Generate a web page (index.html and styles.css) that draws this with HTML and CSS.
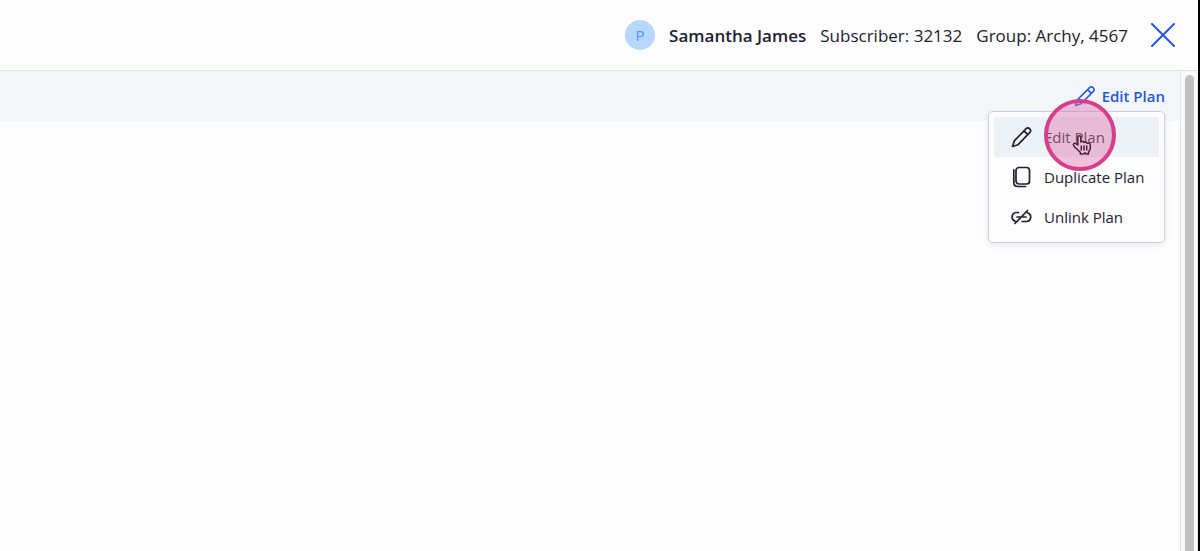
FILE: index.html
```html
<!doctype html>
<html lang="en">
  <head>
    <meta charset="utf-8">
    <meta name="viewport" content="width=device-width, initial-scale=1.0">
    <title>Edit Plan</title>
    <link rel="stylesheet" href="styles.css">
  </head>
  <body>
    <header class="header">
      <span class="avatar">P</span>
      <strong class="name">Samantha James</strong>
      <span>Subscriber: 32132</span>
      <span>Group: Archy, 4567</span>
      <button class="close" type="button" aria-label="Close">
        <svg width="24" height="24" viewBox="0 0 24 24"><path d="M1 1l22 22M23 1L1 23"/></svg>
      </button>
    </header>
    <div class="body">
      <main class="content">
        <div class="toolbar">
          <div class="dropdown">
            <button class="edit" type="button" aria-expanded="true">
              <svg class="icon" viewBox="0 0 22 22"><path d="M1.5 20.5l1.8-5.6L15.6 2.6a2.7 2.7 0 0 1 3.8 3.8L7.1 18.7zM13.6 4.6l3.8 3.8"/></svg>
              Edit Plan
            </button>
            <div class="menu" role="menu">
              <button class="item active" type="button" role="menuitem">
                <svg class="icon" viewBox="0 0 22 22"><path d="M2.5 20.5l1.8-5.6L16.1 2.6a2.7 2.7 0 0 1 3.8 3.8L8.1 18.7zM14 4.8l3.8 3.8"/></svg>
                Edit Plan
              </button>
              <button class="item" type="button" role="menuitem">
                <svg class="icon" viewBox="0 0 22 22"><rect x="6" y="1.5" width="13.5" height="16.5" rx="3"/><path d="M3.8 3.8v12.7c0 2.7 1.3 4 4 4h7.7"/></svg>
                Duplicate Plan
              </button>
              <button class="item" type="button" role="menuitem">
                <svg class="icon" viewBox="0 0 22 22"><path d="M8.5 6.5H6.3a4.5 4.5 0 0 0-1 8.8M7 11h3M5 17.5L17.5 4.5M12 15.5h4.3a4.5 4.5 0 0 0 1.2-8.8M13 11h3"/></svg>
                Unlink Plan
              </button>
            </div>
            <div class="pointer">
              <svg width="22" height="24" viewBox="0 0 22 24"><path d="M6.8 12V4.3c0-2.1 3-2.1 3 0V9c.7-1.2 2.9-1 3.1.5.8-1 2.9-.7 3 .8 1.2-.9 3.4-.2 3.4 1.5V15c0 2-1.1 3.2-1.8 4.2V21h-2.3l-1.2-1.2-1.5 1.2H9.3v-1.8C7.3 17.2 4.5 15 2.8 13c-1.2-1.6.4-3.4 2.1-2.3z"/><path d="M10.3 13v4M13 13v4M15.7 13v4"/></svg>
            </div>
          </div>
        </div>
      </main>
      <div class="scrollbar"><div class="thumb"></div></div>
    </div>
  </body>
</html>
```

FILE: styles.css
```css
* {
  box-sizing: border-box;
}

body {
  display: flex;
  flex-direction: column;
  margin: 0;
  min-height: 100vh;
  border-right: 2px solid #000;
  background: #fdfdfd;
  color: #1f2130;
  font-family: "Open Sans", "Noto Sans", sans-serif;
  font-size: 17px;
}

button {
  padding: 0;
  border: 0;
  background: none;
  color: inherit;
  font: inherit;
  cursor: pointer;
}

svg {
  display: block;
  fill: none;
  stroke: currentColor;
  stroke-width: 2;
  stroke-linecap: round;
  stroke-linejoin: round;
}

.header {
  display: flex;
  align-items: center;
  justify-content: flex-end;
  gap: 14px;
  height: 71px;
  padding: 0 23px;
  border-bottom: 1px solid #dfe2ea;
}

.avatar {
  width: 30px;
  height: 30px;
  border-radius: 50%;
  background: #b7d7fc;
  color: #5a8ff5;
  font-size: 15px;
  line-height: 30px;
  text-align: center;
}

.name {
  font-weight: 600;
}

.close {
  margin-left: 9px;
  color: #2457e0;
}

.body {
  display: flex;
  flex: 1;
}

.content {
  flex: 1;
}

.toolbar {
  display: flex;
  justify-content: flex-end;
  height: 50px;
  padding-right: 15px;
  background: #f3f7fa;
}

.dropdown {
  position: relative;
  display: flex;
}

.icon {
  width: 22px;
  height: 22px;
}

.edit {
  display: flex;
  align-items: center;
  gap: 6px;
  color: #2457e0;
  font-size: 15px;
  font-weight: 600;
}

.edit .icon {
  stroke-width: 1.5;
}

.menu {
  position: absolute;
  top: 40px;
  right: 0;
  width: 177px;
  padding: 5px;
  border: 1px solid #cdd1de;
  border-radius: 5px;
  background: #fdfdfd;
  box-shadow: 0 2px 6px rgba(30, 40, 80, 0.1);
}

.item {
  display: flex;
  align-items: center;
  gap: 12px;
  width: 100%;
  height: 40px;
  padding-left: 16px;
  border-radius: 2px;
  font-size: 15px;
  white-space: nowrap;
}

.item .icon {
  stroke-width: 1.7;
}

.item.active {
  background: #edf2f6;
}

/* click highlight with the hand cursor */
.pointer {
  position: absolute;
  top: 28px;
  right: 49px;
  display: flex;
  align-items: center;
  justify-content: center;
  width: 72px;
  height: 72px;
  padding: 20px 0 0 4px;
  border: 4px solid #d63f8c;
  border-radius: 50%;
  background: rgba(222, 120, 175, 0.45);
  color: #4a1f3c;
  pointer-events: none;
}

.pointer svg {
  stroke-width: 1.5;
}

.pointer path:first-child {
  fill: #e9bfd7;
}

.scrollbar {
  width: 18px;
  padding: 4px 4px 0;
  border-left: 1px solid #e3e3e8;
  border-right: 1px solid #ececec;
  background: #fafafa;
}

.thumb {
  width: 9px;
  height: 100%;
  border-radius: 5px 5px 0 0;
  background: #c1c1c1;
}
```
